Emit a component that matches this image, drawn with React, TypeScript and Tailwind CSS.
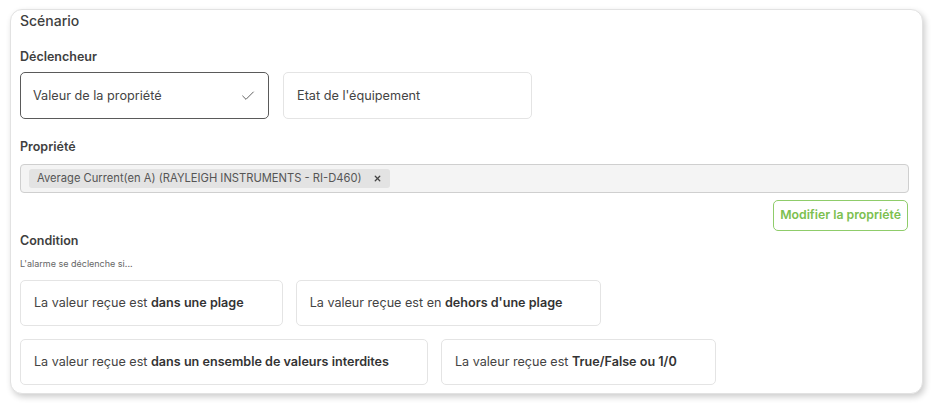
import { Check, X } from 'lucide-react'

const conditions = [
  [
    { pre: 'La valeur reçue est ', bold: 'dans une plage' },
    { pre: 'La valeur reçue est en ', bold: "dehors d'une plage" },
  ],
  [
    { pre: 'La valeur reçue est ', bold: 'dans un ensemble de valeurs interdites' },
    { pre: 'La valeur reçue est ', bold: 'True/False ou 1/0' },
  ],
]

export default function App() {
  return (
    <div className="min-h-screen bg-white pt-[9px] pl-[10px] pr-[12px] font-['Inter',sans-serif] text-[#444]">
      <div className="w-[913px] h-[385px] rounded-[12px] border border-[#e2e2e2] bg-white shadow-[2px_3px_6px_rgba(0,0,0,0.2)] pl-[9px] pr-[13px] pt-[1px]">
        {/* Scénario */}
        <div className="text-[14px] font-medium leading-[20px] text-[#3f3f3f]">Scénario</div>

        {/* Déclencheur */}
        <div className="mt-[18px] text-[12.5px] font-semibold leading-[16px] text-[#3f3f3f]">Déclencheur</div>
        <div className="mt-[7px] flex gap-[14px]">
          <div className="flex h-[47px] w-[249px] items-center justify-between rounded-[5px] border border-[#5a5a5a] pl-[12px] pr-[12px] text-[12.7px] text-[#444]">
            <span>Valeur de la propriété</span>
            <Check className="h-[16px] w-[16px] text-[#555]" strokeWidth={1.4} />
          </div>
          <div className="flex h-[47px] w-[249px] items-center rounded-[5px] border border-[#e4e4e4] pl-[13px] text-[12.7px] text-[#444]">
            Etat de l'équipement
          </div>
        </div>

        {/* Propriété */}
        <div className="mt-[20px] text-[12.5px] font-semibold leading-[16px] text-[#3f3f3f]">Propriété</div>
        <div className="mt-[9px] flex h-[29px] items-center rounded-[4px] border border-[#cfcfcf] bg-[#f4f4f4] pl-[8px]">
          <div className="flex h-[19px] items-center gap-[11px] rounded-[3px] bg-[#e3e3e3] px-[8px] text-[11.2px] text-[#555]">
            <span>Average Current(en A) (RAYLEIGH INSTRUMENTS - RI-D460)</span>
            <X className="h-[9px] w-[9px] text-[#444]" strokeWidth={3.5} />
          </div>
        </div>
        <div className="mt-[7px] flex justify-end pr-[1px]">
          <button className="h-[31px] rounded-[5px] border border-[#8fcc6a] bg-white px-[6px] text-[12.3px] font-semibold text-[#7cc04f]">
            Modifier la propriété
          </button>
        </div>

        {/* Condition */}
        <div className="mt-[2px] text-[12.5px] font-semibold leading-[16px] text-[#3f3f3f]">Condition</div>
        <div className="mt-[9px] text-[9px] leading-[12px] text-[#666]">L'alarme se déclenche si...</div>
        <div className="mt-[10px] flex flex-col gap-[13px]">
          {conditions.map((row, i) => (
            <div key={i} className="flex gap-[13px]">
              {row.map((c) => (
                <div
                  key={c.bold}
                  className="flex h-[46px] items-center rounded-[5px] border border-[#e4e4e4] pl-[13px] pr-[38px] text-[12.6px] text-[#444]"
                >
                  <span>
                    {c.pre}
                    <span className="font-semibold text-[#333]">{c.bold}</span>
                  </span>
                </div>
              ))}
            </div>
          ))}
        </div>
      </div>
    </div>
  )
}
